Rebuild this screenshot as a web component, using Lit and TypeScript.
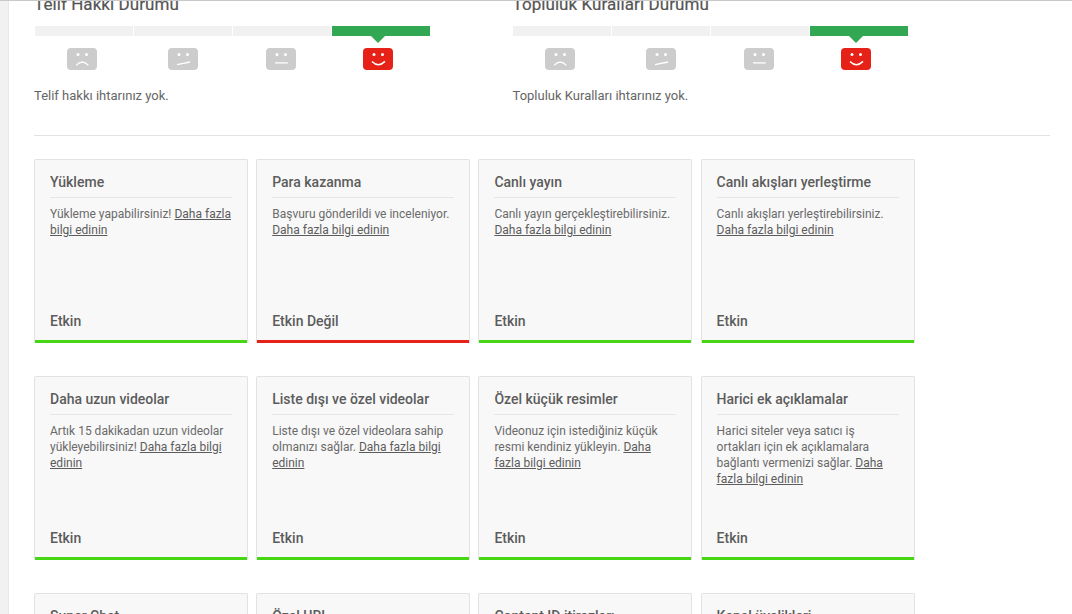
import { LitElement, html, css, svg } from "lit";
import { customElement } from "lit/decorators.js";

const MOUTHS = [
  svg`<path d="M9.2 17.4 Q15.2 10.6 21.4 17.4" fill="none" stroke="#fff" stroke-width="1.3"/>`,
  svg`<path d="M9 16.6 L22 14" fill="none" stroke="#fff" stroke-width="1.3"/>`,
  svg`<path d="M9 14.9 H21.8" fill="none" stroke="#fff" stroke-width="1.3"/>`,
  svg`<path d="M9 13.4 Q15.4 20 22 13.4" fill="none" stroke="#fff" stroke-width="1.5"/>`,
];

const face = (i: number, active: boolean) => html`
  <div class="face ${active ? "on" : ""} f${i}">
    <svg width="30" height="22" viewBox="0 0 30 22">
      <rect width="30" height="22" rx="4" fill="${active ? "#e62117" : "#cccccc"}"/>
      <circle cx="11" cy="6.6" r="1.5" fill="#fff"/>
      <circle cx="19.5" cy="6.6" r="1.5" fill="#fff"/>
      ${MOUTHS[i]}
    </svg>
  </div>`;

interface Card { t: string; d?: string; l?: string; s?: string; off?: boolean; }

const L = "Daha fazla bilgi edinin";
const CARDS: Card[] = [
  { t: "Yükleme", d: "Yükleme yapabilirsiniz! ", l: L, s: "Etkin" },
  { t: "Para kazanma", d: "Başvuru gönderildi ve inceleniyor. ", l: L, s: "Etkin Değil", off: true },
  { t: "Canlı yayın", d: "Canlı yayın gerçekleştirebilirsiniz. ", l: L, s: "Etkin" },
  { t: "Canlı akışları yerleştirme", d: "Canlı akışları yerleştirebilirsiniz. ", l: L, s: "Etkin" },
  { t: "Daha uzun videolar", d: "Artık 15 dakikadan uzun videolar yükleyebilirsiniz! ", l: L, s: "Etkin" },
  { t: "Liste dışı ve özel videolar", d: "Liste dışı ve özel videolara sahip olmanızı sağlar. ", l: L, s: "Etkin" },
  { t: "Özel küçük resimler", d: "Videonuz için istediğiniz küçük resmi kendiniz yükleyin. ", l: L, s: "Etkin" },
  { t: "Harici ek açıklamalar", d: "Harici siteler veya satıcı iş ortakları için ek açıklamalara bağlantı vermenizi sağlar. ", l: L, s: "Etkin" },
  { t: "Super Chat" },
  { t: "Özel URL" },
  { t: "Content ID itirazları" },
  { t: "Kanal üyelikleri" },
];

@customElement("app-root")
export class AppRoot extends LitElement {
  static styles = css`
    :host {
      display: block;
      height: 614px;
      overflow: hidden;
      background: #fff;
      font-family: Roboto, "Liberation Sans", sans-serif;
      color: #666;
    }
    .page {
      display: flex;
      height: 100%;
      border-top: 1px solid #c8c8c8;
      box-sizing: border-box;
    }
    .rail {
      width: 8px;
      flex: none;
      background: #f1f1f1;
      border-right: 1px solid #e8e8e8;
    }
    .main {
      flex: 1;
      min-width: 0;
      padding: 0 22px 0 25px;
      overflow: hidden;
    }
    .status {
      display: flex;
      gap: 82.5px;
      height: 134px;
      border-bottom: 1px solid #e2e2e2;
    }
    .col { width: 396px; }
    .col h2 {
      margin: -7px 0 0;
      font-size: 17px;
      line-height: 20px;
      font-weight: 400;
      letter-spacing: 0.07px;
      color: #555;
      -webkit-text-stroke: 0.2px #555;
    }
    .bars {
      display: grid;
      grid-template-columns: repeat(4, 98px);
      gap: 1px;
      margin: 12px 0 0 1px;
    }
    .col.r .bars { margin-left: 0.5px; }
    .bars i { display: block; height: 10px; background: #f1f1f1; }
    .bars i.on { background: #33a852; }
    .faces { display: flex; margin-top: 12px; }
    .face { position: relative; height: 22px; line-height: 0; }
    .face.on::before {
      content: "";
      position: absolute;
      left: 8px;
      top: -12px;
      border: 7px solid transparent;
      border-bottom: 0;
      border-top-color: #33a852;
    }
    .col .f0 { margin-left: 33px; }
    .col .f1 { margin-left: 71px; }
    .col .f2 { margin-left: 68px; }
    .col .f3 { margin-left: 67px; }
    .col.r .f0 { margin-left: 32.5px; }
    .col p {
      margin: 18px 0 0;
      font-size: 13px;
      line-height: 16px;
    }
    .grid {
      display: grid;
      grid-template-columns: repeat(4, 214px);
      column-gap: 8.2px;
      row-gap: 33px;
      margin-top: 23px;
    }
    .card {
      box-sizing: border-box;
      height: 184px;
      display: flex;
      flex-direction: column;
      background: #f8f8f8;
      border: 1px solid #e2e2e2;
      border-bottom: 0;
      border-radius: 2px 2px 0 0;
    }
    .body {
      flex: 1;
      padding: 14px 15px 0;
      display: flex;
      flex-direction: column;
    }
    .card h3 {
      margin: 0;
      padding-bottom: 6px;
      font-size: 14px;
      line-height: 17px;
      font-weight: 500;
      color: #5c5c5c;
      border-bottom: 1px solid #e6e6e6;
    }
    .desc {
      margin: 8px 0 0;
      font-size: 12px;
      line-height: 16px;
      color: #6a6a6a;
    }
    .desc a { color: #5c5c5c; text-decoration: underline; }
    .state {
      margin-top: auto;
      padding-bottom: 10px;
      font-size: 14px;
      line-height: 17px;
      font-weight: 500;
      color: #5c5c5c;
    }
    .line { height: 3px; background: #47d614; }
    .line.off { background: #e62117; }
  `;

  private col(title: string, msg: string, right: boolean) {
    return html`<section class="col ${right ? "r" : ""}">
      <h2>${title}</h2>
      <div class="bars"><i></i><i></i><i></i><i class="on"></i></div>
      <div class="faces">${[0, 1, 2, 3].map((i) => face(i, i === 3))}</div>
      <p>${msg}</p>
    </section>`;
  }

  render() {
    return html`<div class="page">
      <div class="rail"></div>
      <div class="main">
        <div class="status">
          ${this.col("Telif Hakkı Durumu", "Telif hakkı ihtarınız yok.", false)}
          ${this.col("Topluluk Kuralları Durumu", "Topluluk Kuralları ihtarınız yok.", true)}
        </div>
        <div class="grid">
          ${CARDS.map(
            (c) => html`<article class="card">
              <div class="body">
                <h3>${c.t}</h3>
                ${c.d ? html`<p class="desc">${c.d}<a href="#">${c.l}</a></p>` : ""}
                ${c.s ? html`<div class="state">${c.s}</div>` : ""}
              </div>
              <div class="line ${c.off ? "off" : ""}"></div>
            </article>`
          )}
        </div>
      </div>
    </div>`;
  }
}
